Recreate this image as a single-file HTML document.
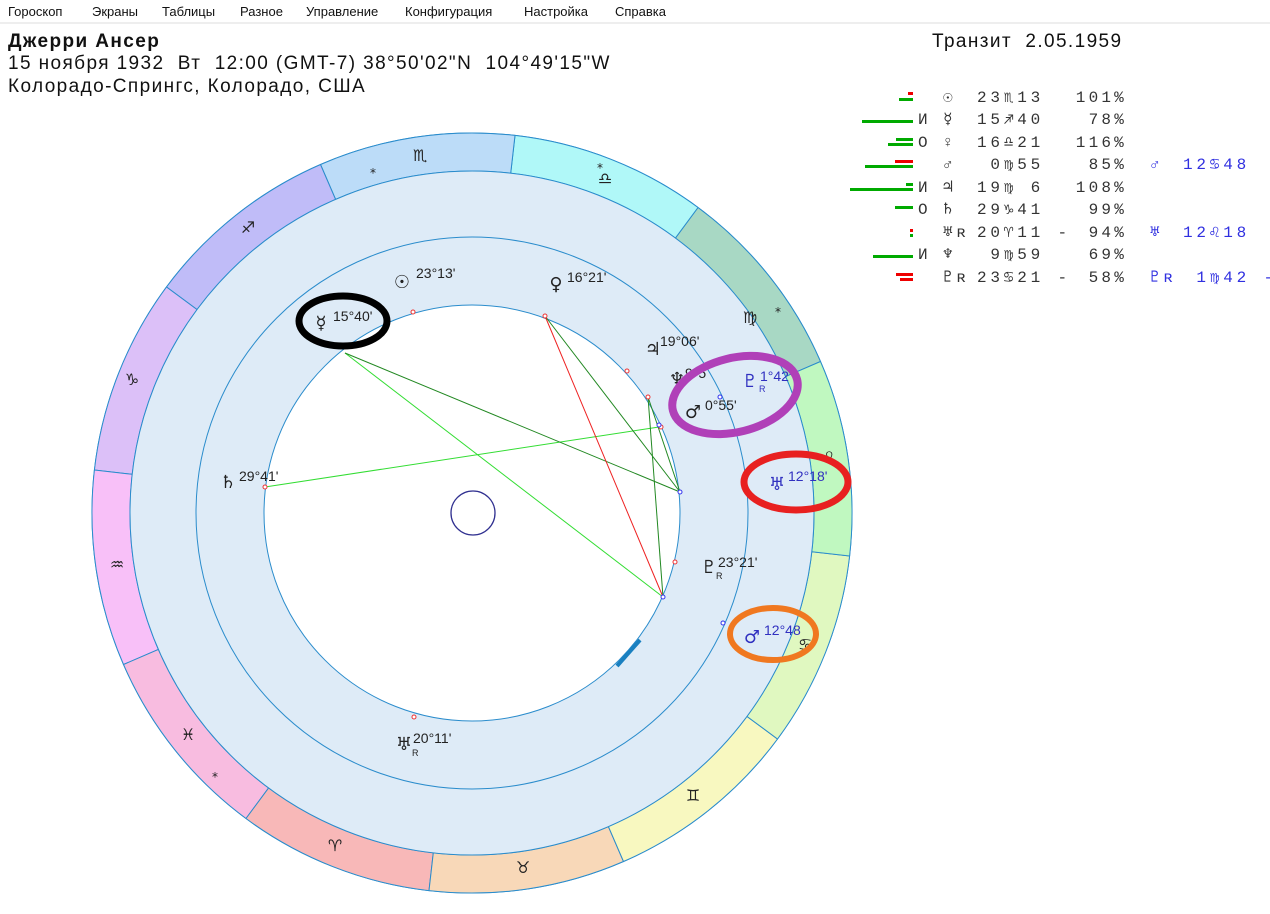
<!DOCTYPE html>
<html><head><meta charset="utf-8">
<style>
body{margin:0;width:1270px;height:914px;background:#fff;position:relative;overflow:hidden;font-family:"Liberation Sans","DejaVu Sans",sans-serif;color:#111}
.menu{position:absolute;left:0;top:0;width:1270px;height:22px;border-bottom:2px solid #eee;font-size:13px}
.menu span{position:absolute;top:4px}
.h{position:absolute;font-size:19px;letter-spacing:1.4px;white-space:nowrap}
.row{position:absolute;left:0;width:1270px;height:20px;font-family:"Liberation Mono","DejaVu Sans Mono",monospace;font-size:16px;color:#333;white-space:pre;line-height:18px}
.row span{position:absolute;top:0;letter-spacing:3.8px}
.a{left:918px}.p{left:943px}.d{left:977px}.c{right:143px;text-align:right;letter-spacing:3.2px!important}.tp{left:1150px;color:#3030e0}.td{left:1183px;color:#3030e0}
.b{position:absolute;height:3px}
.g{background:#0a0}.r{background:#e00}
</style></head><body>
<div class="menu">
<span style="left:8px">Гороскоп</span><span style="left:92px">Экраны</span><span style="left:162px">Таблицы</span><span style="left:240px">Разное</span><span style="left:306px">Управление</span><span style="left:405px">Конфигурация</span><span style="left:524px">Настройка</span><span style="left:615px">Справка</span>
</div>
<div class="h" style="left:8px;top:31px;font-weight:bold">Джерри Ансер</div>
<div class="h" style="left:8px;top:53px">15 ноября 1932&nbsp; Вт&nbsp; 12:00 (GMT-7) 38°50'02"N&nbsp; 104°49'15"W</div>
<div class="h" style="left:8px;top:76px">Колорадо-Спрингс, Колорадо, США</div>
<div class="h" style="left:932px;top:31px">Транзит&nbsp; 2.05.1959</div>

<div class="b r" style="left:908px;top:92px;width:5px"></div><div class="b g" style="left:899px;top:98px;width:14px"></div>
<div class="b g" style="left:862px;top:120px;width:51px"></div>
<div class="b g" style="left:896px;top:138px;width:17px"></div><div class="b g" style="left:888px;top:143px;width:25px"></div>
<div class="b r" style="left:895px;top:160px;width:18px"></div><div class="b g" style="left:865px;top:165px;width:48px"></div>
<div class="b g" style="left:906px;top:183px;width:7px"></div><div class="b g" style="left:850px;top:188px;width:63px"></div>
<div class="b g" style="left:895px;top:206px;width:18px"></div>
<div class="b r" style="left:910px;top:229px;width:3px"></div><div class="b g" style="left:910px;top:234px;width:3px"></div>
<div class="b g" style="left:873px;top:255px;width:40px"></div>
<div class="b r" style="left:896px;top:273px;width:17px"></div><div class="b r" style="left:900px;top:278px;width:13px"></div>

<div class="row" style="top:89px"><span class="p">☉</span><span class="d">23♏13</span><span class="c">101%</span></div>
<div class="row" style="top:111px"><span class="a">И</span><span class="p">☿</span><span class="d">15♐40</span><span class="c">78%</span></div>
<div class="row" style="top:134px"><span class="a">О</span><span class="p">♀</span><span class="d">16♎21</span><span class="c">116%</span></div>
<div class="row" style="top:156px"><span class="p">♂</span><span class="d"> 0♍55</span><span class="c">85%</span><span class="tp">♂</span><span class="td">12♋48</span></div>
<div class="row" style="top:179px"><span class="a">И</span><span class="p">♃</span><span class="d">19♍ 6</span><span class="c">108%</span></div>
<div class="row" style="top:201px"><span class="a">О</span><span class="p">♄</span><span class="d">29♑41</span><span class="c">99%</span></div>
<div class="row" style="top:224px"><span class="p">♅ʀ</span><span class="d">20♈11 -</span><span class="c">94%</span><span class="tp">♅</span><span class="td">12♌18</span></div>
<div class="row" style="top:246px"><span class="a">И</span><span class="p">♆</span><span class="d"> 9♍59</span><span class="c">69%</span></div>
<div class="row" style="top:269px"><span class="p">♇ʀ</span><span class="d">23♋21 -</span><span class="c">58%</span><span class="tp">♇ʀ</span><span class="td"> 1♍42 -</span></div>

<svg style="position:absolute;left:0;top:0" width="1270" height="914" font-family="Liberation Sans, DejaVu Sans, sans-serif">
<g stroke="#2a8ccc" stroke-width="1">
<circle cx="472" cy="513" r="380" fill="#fff"/>
<path d="M820.5,361.5 A380,380 0 0 0 698,207.5 L675.4,238.1 A342,342 0 0 1 785.6,376.6Z" fill="#a8d8c4"/>
<path d="M698,207.5 A380,380 0 0 0 515,135.4 L510.7,173.2 A342,342 0 0 1 675.4,238.1Z" fill="#b0f8f8"/>
<path d="M515,135.4 A380,380 0 0 0 320.5,164.5 L335.6,199.4 A342,342 0 0 1 510.7,173.2Z" fill="#bcdcf8"/>
<path d="M320.5,164.5 A380,380 0 0 0 166.5,287 L197.1,309.6 A342,342 0 0 1 335.6,199.4Z" fill="#c0bcf8"/>
<path d="M166.5,287 A380,380 0 0 0 94.4,470 L132.2,474.3 A342,342 0 0 1 197.1,309.6Z" fill="#dcc0f8"/>
<path d="M94.4,470 A380,380 0 0 0 123.5,664.5 L158.4,649.4 A342,342 0 0 1 132.2,474.3Z" fill="#f8c0f8"/>
<path d="M123.5,664.5 A380,380 0 0 0 246,818.5 L268.6,787.9 A342,342 0 0 1 158.4,649.4Z" fill="#f8bce0"/>
<path d="M246,818.5 A380,380 0 0 0 429,890.6 L433.3,852.8 A342,342 0 0 1 268.6,787.9Z" fill="#f8b8b8"/>
<path d="M429,890.6 A380,380 0 0 0 623.5,861.5 L608.4,826.6 A342,342 0 0 1 433.3,852.8Z" fill="#f8d8b8"/>
<path d="M623.5,861.5 A380,380 0 0 0 777.5,739 L746.9,716.4 A342,342 0 0 1 608.4,826.6Z" fill="#f8f8c0"/>
<path d="M777.5,739 A380,380 0 0 0 849.6,556 L811.8,551.7 A342,342 0 0 1 746.9,716.4Z" fill="#e0f8c0"/>
<path d="M849.6,556 A380,380 0 0 0 820.5,361.5 L785.6,376.6 A342,342 0 0 1 811.8,551.7Z" fill="#c0f8c0"/>
<circle cx="472" cy="513" r="342" fill="#deebf7"/>
<circle cx="472" cy="513" r="276" fill="#deebf7"/>
<circle cx="472" cy="513" r="208" fill="#fff"/>
</g>
<circle cx="473" cy="513" r="22" fill="none" stroke="#303090" stroke-width="1.3"/>
<line x1="617" y1="666" x2="640" y2="640" stroke="#1a80c0" stroke-width="4"/>
<g stroke-width="1">
<line x1="345" y1="353" x2="663" y2="597" stroke="#33dd33"/>
<line x1="265" y1="487" x2="659" y2="427" stroke="#33dd33"/>
<line x1="345" y1="353" x2="680" y2="492" stroke="#228822"/>
<line x1="545" y1="316" x2="680" y2="492" stroke="#228822"/>
<line x1="648" y1="397" x2="680" y2="492" stroke="#228822"/>
<line x1="648" y1="397" x2="663" y2="597" stroke="#228822"/>
<line x1="545" y1="316" x2="663" y2="597" stroke="#ee2222"/>
</g>
<g fill="#fff" stroke-width="1">
<circle cx="413" cy="312" r="2" stroke="#e33"/><circle cx="545" cy="316" r="2" stroke="#e33"/>
<circle cx="627" cy="371" r="2" stroke="#e33"/><circle cx="648" cy="397" r="2" stroke="#e33"/>
<circle cx="675" cy="562" r="2" stroke="#e33"/><circle cx="265" cy="487" r="2" stroke="#e33"/>
<circle cx="414" cy="717" r="2" stroke="#e33"/><circle cx="661" cy="427" r="2" stroke="#e33"/>
<circle cx="680" cy="492" r="2" stroke="#33e"/><circle cx="663" cy="597" r="2" stroke="#33e"/>
<circle cx="720" cy="397" r="2" stroke="#33e"/><circle cx="723" cy="623" r="2" stroke="#33e"/>
<circle cx="659" cy="425" r="2" stroke="#33e"/>
</g>
<g font-size="16" fill="#222" text-anchor="middle" font-family="DejaVu Sans, sans-serif">
<text x="420" y="161">♏</text><text x="605" y="184">♎</text><text x="750" y="323">♍</text>
<text x="828" y="463">♌</text><text x="805" y="650">♋</text><text x="693" y="801">♊</text>
<text x="523" y="873">♉</text><text x="335" y="851">♈</text><text x="188" y="740">♓</text>
<text x="117" y="570">♒</text><text x="132" y="385">♑</text><text x="248" y="233">♐</text>
<text x="373" y="177" font-size="12">*</text><text x="600" y="172" font-size="12">*</text>
<text x="778" y="316" font-size="12">*</text><text x="215" y="781" font-size="12">*</text>
</g>
<g font-size="18" fill="#222" font-family="DejaVu Sans, sans-serif" text-anchor="middle">
<text x="402" y="288">☉</text><text x="556" y="290">♀</text><text x="321" y="329">☿</text>
<text x="653" y="355">♃</text><text x="677" y="385">♆</text><text x="693" y="418">♂</text>
<text x="709" y="573">♇</text><text x="228" y="488">♄</text><text x="404" y="750">♅</text>
<g fill="#3030c0"><text x="750" y="387">♇</text><text x="777" y="490">♅</text><text x="752" y="643">♂</text></g>
</g>
<g font-size="14" fill="#222">
<text x="416" y="278">23°13'</text><text x="567" y="282">16°21'</text><text x="333" y="321">15°40'</text>
<text x="660" y="346">19°06'</text><text x="685" y="378">9°5</text><text x="705" y="410">0°55'</text>
<text x="718" y="567">23°21'</text><text x="239" y="481">29°41'</text><text x="413" y="743">20°11'</text>
<text x="716" y="579" font-size="9">R</text><text x="412" y="756" font-size="9">R</text>
<g fill="#3030c0"><text x="760" y="381">1°42'</text><text x="788" y="481">12°18'</text><text x="764" y="635">12°48</text>
<text x="759" y="392" font-size="9">R</text></g>
</g>
<g fill="none">
<ellipse cx="343" cy="321" rx="44" ry="25" stroke="#000" stroke-width="7"/>
<ellipse cx="735" cy="395" rx="64" ry="37" stroke="#b040b8" stroke-width="8" transform="rotate(-14 735 395)"/>
<ellipse cx="796" cy="482" rx="52" ry="28" stroke="#e82020" stroke-width="7"/>
<ellipse cx="773" cy="634" rx="43" ry="26" stroke="#f07820" stroke-width="6"/>
</g>
</svg>
</body></html>
